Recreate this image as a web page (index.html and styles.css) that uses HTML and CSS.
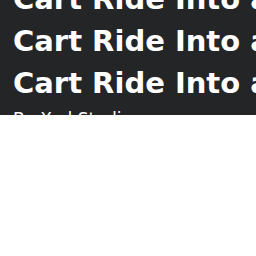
FILE: index.html
```html
<!DOCTYPE html>
<html>
<head>
<meta charset="utf-8">
<link rel="stylesheet" href="styles.css">
</head>
<body>
<div class="header">
  <div class="titles">
    <h1 class="title">Cart Ride Into a Rainbow Ocean</h1>
    <h1 class="title">Cart Ride Into a Rainbow Ocean</h1>
    <h1 class="title">Cart Ride Into a Rainbow Ocean</h1>
    <div class="creator">By Xed Studios</div>
  </div>
</div>
</body>
</html>
```
FILE: styles.css
```css
html, body {
  margin: 0;
  padding: 0;
  background: #ffffff;
}
.header {
  background: #232527;
  height: 115px;
  overflow: hidden;
}
.titles {
  margin-top: -22px;
  padding-left: 13px;
}
.title {
  margin: 0;
  font-family: "DejaVu Sans", sans-serif;
  font-weight: 700;
  font-size: 29px;
  line-height: 42px;
  color: #ffffff;
  white-space: nowrap;
}
.creator {
  font-family: "DejaVu Sans", sans-serif;
  font-size: 17px;
  line-height: 20px;
  color: #ffffff;
  margin-top: 5px;
}
```
